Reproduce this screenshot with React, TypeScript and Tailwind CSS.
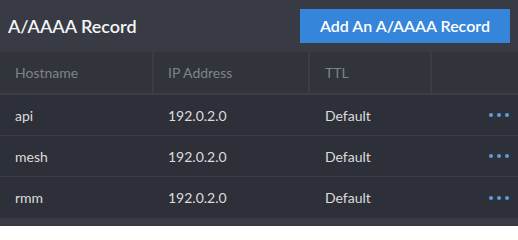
const rows = [
  { host: 'api', ip: '192.0.2.0', ttl: 'Default' },
  { host: 'mesh', ip: '192.0.2.0', ttl: 'Default' },
  { host: 'rmm', ip: '192.0.2.0', ttl: 'Default' },
]

const cols = 'grid grid-cols-[154px_156px_122px_1fr]'

function Dots() {
  return (
    <div className="flex items-center justify-end gap-1 pr-[9px]">
      <span className="size-1 rounded-full bg-[#5d9de2]" />
      <span className="size-1 rounded-full bg-[#5d9de2]" />
      <span className="size-1 rounded-full bg-[#5d9de2]" />
    </div>
  )
}

export default function App() {
  return (
    <div
      className="h-[226px] w-[518px] bg-[#383b43]"
      style={{ fontFamily: 'Lato, "Noto Sans", sans-serif' }}
    >
      <div className="flex h-[52px] items-center justify-between pl-2 pr-2">
        <h1 className="text-[18px] font-semibold text-[#f3f4f5]">A/AAAA Record</h1>
        <button className="h-[34px] w-[210px] bg-[#3585db] text-[16px] font-semibold text-white">
          Add An A/AAAA Record
        </button>
      </div>

      <div className={`${cols} h-[43px] border-b-2 border-[#3a3d45] bg-[#31343b] text-[14px] text-[#7e838b]`}>
        <div className="flex items-center border-r-2 border-[#3a3d45] pl-[15px]">Hostname</div>
        <div className="flex items-center border-r-2 border-[#3a3d45] pl-[14px]">IP Address</div>
        <div className="flex items-center border-r-2 border-[#3a3d45] pl-[15px]">TTL</div>
        <div />
      </div>

      {rows.map((r, i) => (
        <div
          key={r.host}
          className={`${cols} h-[41px] bg-[#2d3038] text-[14px] text-[#dcdcdd] ${i < rows.length - 1 ? 'border-b border-[#3a3d45]' : ''}`}
        >
          <div className="flex items-center pl-[15px]">{r.host}</div>
          <div className="flex items-center pl-[14px]">{r.ip}</div>
          <div className="flex items-center pl-[15px]">{r.ttl}</div>
          <Dots />
        </div>
      ))}
    </div>
  )
}
